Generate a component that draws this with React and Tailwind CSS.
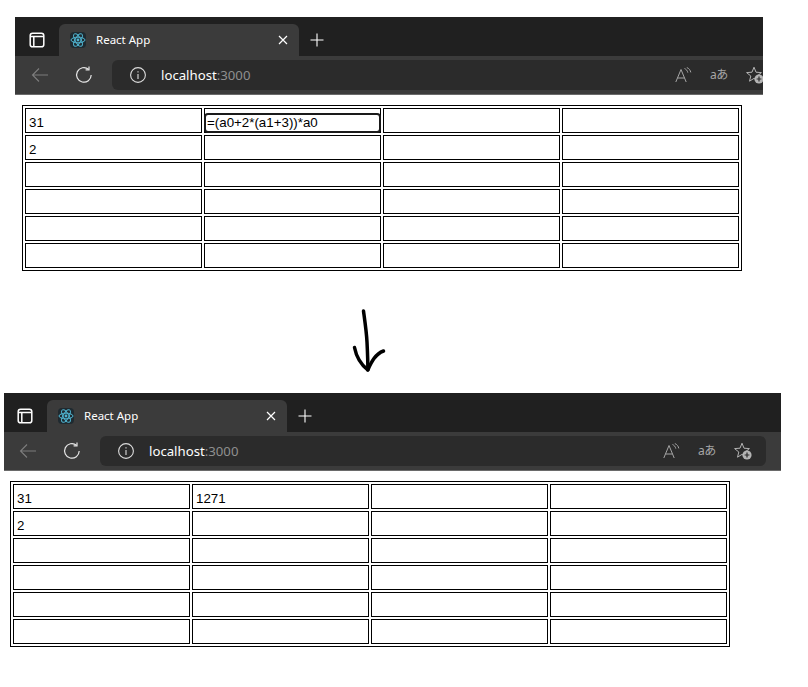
import React from "react";

const rows = [0, 1, 2, 3, 4, 5];
const cols = [0, 1, 2, 3];

const ReactLogo = () => (
  <div className="flex h-4 w-4 items-center justify-center rounded-sm bg-[#1f2a30]">
    <svg width="16" height="16" viewBox="0 0 16 16" fill="none" stroke="#4fb3cf" strokeWidth="1">
      <ellipse cx="8" cy="8" rx="7" ry="2.8" />
      <ellipse cx="8" cy="8" rx="7" ry="2.8" transform="rotate(60 8 8)" />
      <ellipse cx="8" cy="8" rx="7" ry="2.8" transform="rotate(120 8 8)" />
      <circle cx="8" cy="8" r="1.4" fill="#4fb3cf" stroke="none" />
    </svg>
  </div>
);

const TabsIcon = () => (
  <svg width="16" height="16" viewBox="0 0 16 16" fill="none" stroke="#fff" strokeWidth="1.5">
    <rect x="1.2" y="1.2" width="13.6" height="13.6" rx="2.4" />
    <path d="M1.2 4.4H14.8M4.8 4.4V14.8" />
  </svg>
);

const CloseIcon = () => (
  <svg width="10" height="10" viewBox="0 0 10 10" stroke="#fff" strokeWidth="1.2">
    <path d="M1 1L9 9M9 1L1 9" />
  </svg>
);

const PlusIcon = () => (
  <svg width="14" height="14" viewBox="0 0 14 14" stroke="#fff" strokeWidth="1.1">
    <path d="M7 0.5V13.5M0.5 7H13.5" />
  </svg>
);

const BackIcon = () => (
  <svg width="18" height="16" viewBox="0 0 18 16" fill="none" stroke="#7d7d7d" strokeWidth="1.1">
    <path d="M17 8H1.5M8 1.5L1.5 8L8 14.5" />
  </svg>
);

const ReloadIcon = () => (
  <svg width="18" height="18" viewBox="0 0 18 18" fill="none" stroke="#e6e6e6" strokeWidth="1.2">
    <path d="M13.5 3.2A7.3 7.3 0 1 0 16.2 9" />
    <path d="M14 0.5V3.8H10.6" />
  </svg>
);

const InfoIcon = () => (
  <svg width="16" height="16" viewBox="0 0 16 16" fill="none" stroke="#dcdcdc" strokeWidth="1.1">
    <circle cx="8" cy="8" r="7.4" />
    <path d="M8 7V12M8 4.2V5.6" />
  </svg>
);

const ReadAloudIcon = () => (
  <svg width="17" height="16" viewBox="0 0 17 16" fill="none" stroke="#a6a6a6" strokeWidth="1">
    <path d="M0.8 15L6 2.5L11.2 15M2.6 11H9.4" />
    <path d="M9.5 1.5C11.4 2.4 12.4 3.7 12.8 5.6M11.8 0.5C14 1.5 15.4 3.2 15.8 5.4" />
  </svg>
);

const FavoriteIcon = () => (
  <svg width="18" height="18" viewBox="0 0 18 18" fill="none">
    <path d="M8 1.2L10 6.2L15.4 6.6L11.2 10L12.5 15.2L8 12.4L3.5 15.2L4.8 10L0.6 6.6L6 6.2Z" stroke="#b4b4b4" strokeWidth="1" />
    <circle cx="13" cy="13" r="4.6" fill="#b4b4b4" />
    <path d="M13 10.6V15.4M10.6 13H15.4" stroke="#2b2b2b" strokeWidth="1.2" />
  </svg>
);

// the upper capture sits 1px further right inside its crop, so the two lead margins differ
const BrowserBar = ({ width, iconLead, backLead }) => (
  <div className="h-[78px] overflow-hidden" style={{ width }}>
    <div className="w-[777px] font-['Noto_Sans',sans-serif]">
      <div className="flex h-[39px] items-end bg-[#202020]">
        <div className={`mb-[8px] flex h-4 w-4 items-center ${iconLead}`}>
          <TabsIcon />
        </div>
        <div className="ml-[14px] flex h-[32px] w-[240px] items-center rounded-t-md bg-[#3b3b3b] pl-[11px] pr-[11px]">
          <ReactLogo />
          <span className="ml-[10px] text-[11.5px] text-white">React App</span>
          <div className="ml-auto flex items-center">
            <CloseIcon />
          </div>
        </div>
        <div className="mb-[9px] ml-[11px] flex items-center">
          <PlusIcon />
        </div>
      </div>
      <div className="flex h-[39px] items-center border-b border-[#6a6a6a] bg-[#3b3b3b]">
        <div className={`flex items-center ${backLead}`}>
          <BackIcon />
        </div>
        <div className="ml-[26px] flex items-center">
          <ReloadIcon />
        </div>
        <div className="ml-[19px] flex h-[30px] w-[666px] items-center rounded-md bg-[#2b2b2b]">
          <div className="ml-[18px] flex items-center">
            <InfoIcon />
          </div>
          <span className="ml-[15px] pt-px text-[13.2px] text-white">
            localhost<span className="text-[#8f8f8f]">:3000</span>
          </span>
          <div className="ml-auto flex items-center pr-[14px]">
            <ReadAloudIcon />
            <span className="ml-[18px] w-[18px] whitespace-nowrap font-['Noto_Sans','Noto_Sans_CJK_JP',sans-serif] text-[12px] leading-4 tracking-[-0.5px] text-[#a6a6a6]">aあ</span>
            <div className="ml-[18px] flex items-center">
              <FavoriteIcon />
            </div>
          </div>
        </div>
      </div>
    </div>
  </div>
);

const Sheet = ({ a1 }) => (
  <table className="w-[720px] table-fixed border-separate border-spacing-[2px] border border-black font-['Liberation_Sans',sans-serif] text-[13.33px] text-black">
    <tbody>
      {rows.map((r) => (
        <tr key={r}>
          {cols.map((c) => {
            const value = r === 0 && c === 0 ? "31" : r === 1 && c === 0 ? "2" : r === 0 && c === 1 ? a1 : "";
            const editing = r === 0 && c === 1 && a1.startsWith("=");
            return (
              <td key={c} className="h-[25px] border border-black p-0 align-top">
                {editing ? (
                  <div className="-mx-[1px] mt-[4px] -mb-[1px] flex h-[20px] items-center rounded-[4px] border-2 border-[#1a1a1a] bg-white pl-[1px]">{value}</div>
                ) : (
                  <div className="flex h-[23px] items-center pl-[3px] pt-[5px]">{value}</div>
                )}
              </td>
            );
          })}
        </tr>
      ))}
    </tbody>
  </table>
);

const Arrow = () => (
  <svg className="ml-[350px] mt-[37px] block" width="38" height="66" viewBox="0 0 38 66" fill="none" stroke="#000" strokeWidth="3.5" strokeLinecap="round" strokeLinejoin="round">
    <path d="M13.5 3C15 14 16.5 24 17 34C17.5 44 18 54 17.8 62" />
    <path d="M4.5 39.5C6 47 9 55 17.8 62C21 55 25 46 33.5 43" />
  </svg>
);

export default function App() {
  return (
    <div className="min-h-[687px] bg-white pt-[17px]">
      <div className="ml-[15px]">
        <BrowserBar width={748} iconLead="ml-[14px]" backLead="ml-[16px]" />
      </div>
      <div className="ml-[22px] mt-[10px]">
        <Sheet a1="=(a0+2*(a1+3))*a0" />
      </div>
      <Arrow />
      <div className="ml-[4px] mt-[19px]">
        <BrowserBar width={777} iconLead="ml-[13px]" backLead="ml-[15px]" />
      </div>
      <div className="ml-[10px] mt-[10px]">
        <Sheet a1="1271" />
      </div>
    </div>
  );
}
